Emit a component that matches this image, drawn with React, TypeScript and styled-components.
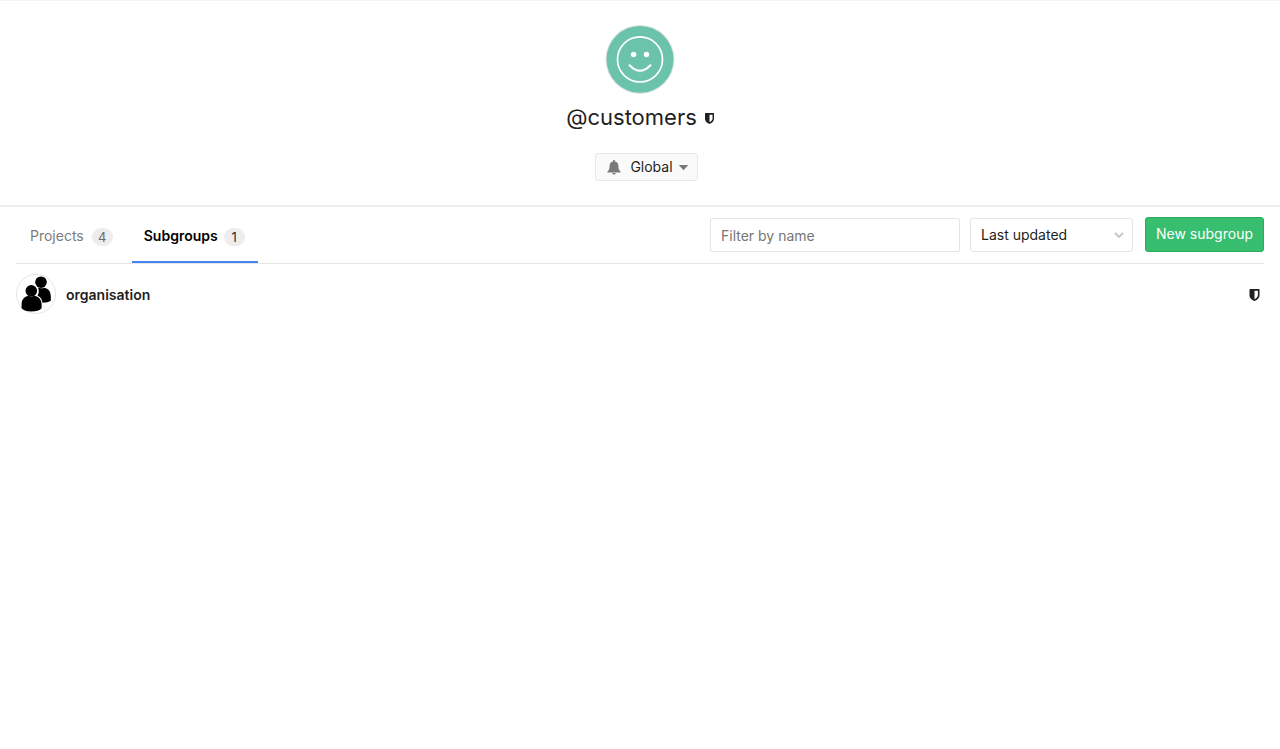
import React from "react";
import styled, { createGlobalStyle } from "styled-components";

const GlobalStyle = createGlobalStyle`
  * { box-sizing: border-box; }
  body {
    margin: 0;
    background: #fff;
    color: #1f1f1f;
    font: 400 14px/20px Inter, "Liberation Sans", sans-serif;
  }
  button, input, select { font: inherit; color: inherit; }
`;

const GroupHeader = styled.header`
  display: flex;
  flex-direction: column;
  align-items: center;
  padding: 23px 16px 24px;
  border-top: 1px solid #f4f4f4;
  border-bottom: 2px solid #eee;
`;

const GroupAvatar = styled.svg`
  display: block;
  width: 70px;
  height: 70px;
`;

const Title = styled.h1`
  display: flex;
  align-items: center;
  gap: 8px;
  margin: 8px 0 20px;
  font-size: 22px;
  font-weight: 400;
  line-height: 31px;
  svg { margin-top: 2px; }
`;

const NotificationButton = styled.button`
  display: flex;
  align-items: center;
  height: 28px;
  margin-left: 13px;
  padding: 0 9px 0 11px;
  border: 1px solid #e8e8e8;
  border-radius: 3px;
  background: #fafafa;
  cursor: pointer;
`;

const ButtonText = styled.span`
  margin: 0 6px 0 9px;
`;

const Content = styled.main`
  padding: 0 16px;
`;

const Toolbar = styled.div`
  display: flex;
  justify-content: space-between;
  border-bottom: 1px solid #e5e5e5;
`;

const Tabs = styled.nav`
  display: flex;
  gap: 4px;
`;

const Tab = styled.a<{ $active?: boolean }>`
  display: flex;
  align-items: center;
  gap: ${(p) => (p.$active ? 6 : 8)}px;
  height: 56px;
  padding: ${(p) => (p.$active ? "4px 13px 0 12px" : "4px 15px 0 14px")};
  border-bottom: 2px solid ${(p) => (p.$active ? "#4285f4" : "transparent")};
  color: ${(p) => (p.$active ? "#000" : "#7c7c7c")};
  font-weight: ${(p) => (p.$active ? 600 : 400)};
  text-decoration: none;
`;

const Count = styled.span<{ $active?: boolean }>`
  min-width: 21px;
  margin-top: 2px;
  padding: 0 6px;
  border-radius: 9px;
  background: #ededed;
  color: ${(p) => (p.$active ? "#2e2e2e" : "#6a6a6a")};
  font-size: 13px;
  font-weight: 400;
  line-height: 18px;
  text-align: center;
`;

const Controls = styled.div`
  display: flex;
  align-items: flex-start;
  gap: 10px;
  padding-top: 10px;
`;

const FilterInput = styled.input`
  width: 250px;
  height: 34px;
  margin-top: 1px;
  padding: 0 10px;
  border: 1px solid #e5e5e5;
  border-radius: 2px;
  background: #fff;
  &::placeholder { color: #767676; opacity: 1; }
`;

const SortField = styled.div`
  display: grid;
  width: 163px;
  margin-top: 1px;
  align-items: center;
  & > * { grid-area: 1 / 1; }
  svg { justify-self: end; margin-right: 9px; pointer-events: none; }
`;

const SortSelect = styled.select`
  width: 100%;
  height: 34px;
  padding: 0 28px 0 10px;
  border: 1px solid #e5e5e5;
  border-radius: 3px;
  background: #fff;
  appearance: none;
`;

const NewButton = styled.button`
  width: 119px;
  height: 35px;
  margin-left: 2px;
  padding: 0 0 1px;
  border: 1px solid #2faa60;
  border-radius: 3px;
  background: #37be6f;
  color: #fff;
  white-space: nowrap;
  cursor: pointer;
`;

const GroupList = styled.ul`
  margin: 0;
  padding: 0;
  list-style: none;
`;

const GroupRow = styled.li`
  display: flex;
  align-items: center;
  gap: 10px;
  padding: 10px 4px 10px 0;
`;

const RowAvatar = styled.svg`
  display: block;
  width: 40px;
  height: 40px;
`;

const GroupLink = styled.a`
  flex: 1;
  padding-top: 2px;
  color: #1f1f1f;
  font-weight: 600;
  text-decoration: none;
`;

const Visibility = styled.span`
  display: flex;
  padding-top: 2px;
`;

const ShieldIcon = ({ width, height }: { width: number; height: number }) => (
  <svg width={width} height={height} viewBox="0 0 10 12" role="img" aria-label="Private">
    <path
      fill="#1f1f1f"
      fillRule="evenodd"
      d="M.6 0h8.8q.6 0 .6.6v5.9C10 9.4 7 11.200 5 12 3 11.200 0 9.400 0 6.500V.6Q0 0 .6 0zM5 1.700v8.500c1.600-.9 3.400-2.200 3.400-3.900V1.700z"
    />
  </svg>
);

const BellIcon = () => (
  <svg width="14" height="15" viewBox="0 0 14 15" aria-hidden="true">
    <path
      fill="#7a7a7a"
      d="M7 0c.6 0 1 .4 1 1v.4c2.200.5 3.400 2.200 3.400 4.400 0 3.200.8 4.900 2.200 5.900.3.400.100.900-.5.900H.9c-.6 0-.8-.5-.5-.9 1.400-1 2.200-2.700 2.200-5.900C2.600 3.600 3.800 1.900 6 1.400V1c0-.6.400-1 1-1zM5.200 13h3.600a1.800 1.500 0 0 1-3.600 0z"
    />
  </svg>
);

export default function App() {
  return (
    <>
      <GlobalStyle />
      <GroupHeader>
        <GroupAvatar viewBox="0 0 70 70" role="img" aria-label="customers avatar">
          <circle cx="35" cy="35.400" r="34.500" fill="#dde3e1" />
          <circle cx="35" cy="35.400" r="33.400" fill="#6bc3ab" />
          <circle cx="35" cy="35.400" r="22.500" fill="none" stroke="#fff" strokeWidth="1.700" />
          <circle cx="28.600" cy="30.500" r="2.700" fill="#fff" />
          <circle cx="41.500" cy="30.500" r="2.700" fill="#fff" />
          <path d="M24.600 41.200q10.400 11 20.800 0" fill="none" stroke="#fff" strokeWidth="2" strokeLinecap="round" />
        </GroupAvatar>
        <Title>
          @customers
          <ShieldIcon width={9} height={11} />
        </Title>
        <NotificationButton type="button">
          <BellIcon />
          <ButtonText>Global</ButtonText>
          <svg width="9" height="5" viewBox="0 0 9 5" aria-hidden="true">
            <path d="M.5 0h8q.7 0 .3.500L5 4.700q-.5.500-1 0L.2.500Q-.2 0 .5 0z" fill="#7a7a7a" />
          </svg>
        </NotificationButton>
      </GroupHeader>
      <Content>
        <Toolbar>
          <Tabs>
            <Tab href="#projects">
              Projects <Count>4</Count>
            </Tab>
            <Tab href="#subgroups" $active aria-current="page">
              Subgroups <Count $active>1</Count>
            </Tab>
          </Tabs>
          <Controls>
            <FilterInput type="search" placeholder="Filter by name" aria-label="Filter by name" />
            <SortField>
              <SortSelect aria-label="Sort by">
                <option>Last updated</option>
              </SortSelect>
              <svg width="10" height="6" viewBox="0 0 10 6" aria-hidden="true">
                <path d="M1 1l4 4 4-4" fill="none" stroke="#c4c4c4" strokeWidth="1.800" />
              </svg>
            </SortField>
            <NewButton type="button">New subgroup</NewButton>
          </Controls>
        </Toolbar>
        <GroupList>
          <GroupRow>
            <RowAvatar viewBox="0 0 40 40" role="img" aria-label="organisation avatar">
              <circle cx="20" cy="20" r="19.500" fill="#fff" stroke="#e5e5e5" />
              <circle cx="25" cy="8.200" r="5.800" />
              <path d="M21.800 13.600c1.800.9 4.600.9 6.400.2 4.300.8 6.600 3.700 6.600 8.700v4.300c-1.800 1.300-4.600 2-8.300 2-.4-3.600-2.200-6-5-7.300 1.700-2.500 1.700-5.600.3-7.900z" />
              <circle cx="15.300" cy="16.800" r="5.800" />
              <path d="M12.500 21.800c1.800.9 4 .9 5.800 0 5 .8 7.300 4 7.300 9v3.500c-1.800 2.300-5.600 3.300-10.200 3.300-4.300 0-7.800-1-9.800-3.300v-3.500c0-5 2.300-8.200 6.900-9z" />
            </RowAvatar>
            <GroupLink href="#organisation">organisation</GroupLink>
            <Visibility>
              <ShieldIcon width={11} height={12} />
            </Visibility>
          </GroupRow>
        </GroupList>
      </Content>
    </>
  );
}
